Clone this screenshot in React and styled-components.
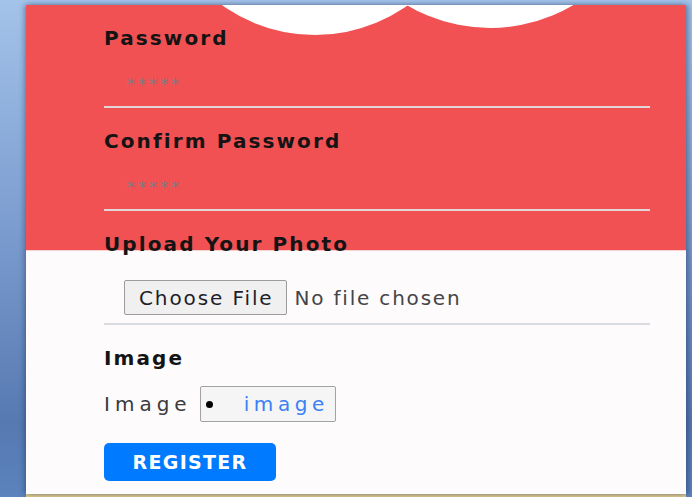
import React from 'react';
import styled, { createGlobalStyle } from 'styled-components';

const App = () => {
  return (
    <>
      <GlobalStyle />
      <Page>
        <Card>
          <Bubble $x={289} $y={-130} $r={160} />
          <Bubble $x={464} $y={-140} $r={163} />
          <Form onSubmit={(e) => e.preventDefault()}>
            <Field>
              <Label htmlFor="password">Password</Label>
              <TextInput id="password" type="password" placeholder="*****" />
            </Field>
            <Field>
              <Label htmlFor="confirm">Confirm Password</Label>
              <TextInput id="confirm" type="password" placeholder="*****" />
            </Field>
            <Field>
              <Label>Upload Your Photo</Label>
              <FileRow>
                <FileButton type="button">Choose File</FileButton>
                <FileName>No file chosen</FileName>
              </FileRow>
            </Field>
            <Field>
              <Label>Image</Label>
              <ImageRow>
                <PlainText>Image</PlainText>
                <LinkBox>
                  <Bullet />
                  <ImageLink href="#image" onClick={(e) => e.preventDefault()}>
                    image
                  </ImageLink>
                </LinkBox>
              </ImageRow>
            </Field>
            <RegisterButton type="submit">REGISTER</RegisterButton>
          </Form>
        </Card>
        <BottomStrip />
      </Page>
    </>
  );
};

export default App;

// Styled Components
const GlobalStyle = createGlobalStyle`
  html, body {
    margin: 0;
    padding: 0;
  }
  body {
    background: linear-gradient(to bottom, #a3c3ea 0%, #7c9dcf 45%, #5779b2 85%, #5b83bc 100%);
    font-family: "DejaVu Sans", "Liberation Sans", sans-serif;
  }
`;

const Page = styled.div`
  width: 692px;
  height: 497px;
  box-sizing: border-box;
  padding: 5px 6px 0 26px;
  display: flex;
  flex-direction: column;
  overflow: hidden;
`;

const Card = styled.div`
  position: relative;
  height: 489px;
  flex-shrink: 0;
  overflow: hidden;
  background: linear-gradient(
    to bottom,
    #f15153 0,
    #f15153 245px,
    #f6d2d4 245px,
    #f6d2d4 246px,
    #fdfbfc 246px
  );
  box-shadow: -2px 0 5px rgba(20, 40, 80, 0.35), 3px 0 5px rgba(20, 40, 80, 0.35);
`;

const Bubble = styled.div`
  position: absolute;
  left: ${(p) => p.$x - p.$r}px;
  top: ${(p) => p.$y - p.$r}px;
  width: ${(p) => p.$r * 2}px;
  height: ${(p) => p.$r * 2}px;
  border-radius: 50%;
  background: #ffffff;
`;

const Form = styled.form`
  position: relative;
  width: 546px;
  margin-left: 78px;
  padding-top: 21px;
  display: flex;
  flex-direction: column;
`;

const Field = styled.div`
  & + & {
    margin-top: 21px;
  }
`;

const Label = styled.label`
  display: block;
  font-size: 20px;
  line-height: 24px;
  font-weight: bold;
  letter-spacing: 2.1px;
  color: #141414;
`;

const TextInput = styled.input`
  display: block;
  box-sizing: border-box;
  width: 100%;
  height: 58px;
  padding: 12px 0 0 23px;
  border: none;
  border-bottom: 2px solid #e2d6d8;
  background: transparent;
  font-family: "DejaVu Sans", sans-serif;
  font-size: 16px;
  letter-spacing: 3px;
  color: #333;
  outline: none;

  &::placeholder {
    color: #7c7c80;
  }
`;

const FileRow = styled.div`
  display: flex;
  align-items: center;
  gap: 8px;
  padding: 24px 0 8px 20px;
  border-bottom: 2px solid #d9dbe1;
`;

const FileButton = styled.button`
  height: 35px;
  padding: 0 12px 0 14px;
  border: 1px solid #9c9c9c;
  border-radius: 2px;
  background: #f0f0f0;
  font-family: "DejaVu Sans", sans-serif;
  font-size: 20px;
  letter-spacing: 1.9px;
  color: #1e1e2a;
  cursor: pointer;
`;

const FileName = styled.span`
  font-size: 20px;
  letter-spacing: 1.8px;
  color: #454548;
`;

const ImageRow = styled.div`
  display: flex;
  align-items: center;
  gap: 8px;
  margin-top: 16px;
`;

const PlainText = styled.span`
  font-size: 20px;
  letter-spacing: 5px;
  color: #3a3a3c;
`;

const LinkBox = styled.span`
  box-sizing: border-box;
  width: 136px;
  height: 36px;
  display: flex;
  align-items: center;
  padding-left: 5px;
  border: 1px solid #a2a2a2;
  border-radius: 2px;
  background: #f5f5f5;
`;

const Bullet = styled.span`
  width: 7px;
  height: 7px;
  border-radius: 50%;
  background: #000;
  margin-right: 31px;
  flex-shrink: 0;
`;

const ImageLink = styled.a`
  font-size: 20px;
  letter-spacing: 4.6px;
  color: #3a80f6;
  text-decoration: none;
  white-space: nowrap;
`;

const RegisterButton = styled.button`
  align-self: flex-start;
  margin-top: 21px;
  width: 172px;
  height: 38px;
  border: none;
  border-radius: 5px;
  background: #007bff;
  color: #fff;
  font-family: "DejaVu Sans", sans-serif;
  font-size: 19px;
  font-weight: bold;
  letter-spacing: 1.3px;
  cursor: pointer;
`;

const BottomStrip = styled.div`
  height: 3px;
  flex-shrink: 0;
  background: #e5cf8f;
`;
